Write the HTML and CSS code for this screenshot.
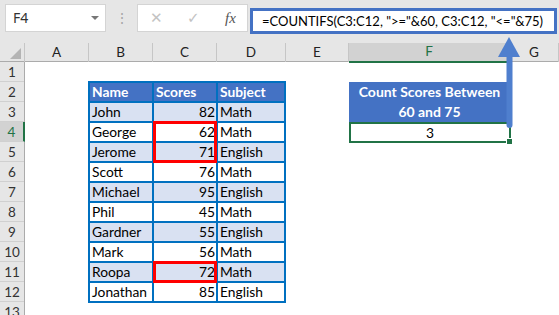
FILE: index.html
```html
<!DOCTYPE html>
<html lang="en">
<head>
  <meta charset="UTF-8">
  <title>COUNTIFS between two values</title>
  <link rel="stylesheet" href="styles.css">
</head>
<body>
  <div class="window">
    <!-- formula bar -->
    <div class="toolbar">
      <div class="name-box">F4<span class="drop"></span></div>
      <div class="grip">&#8942;</div>
      <div class="fx-box">
        <span class="btn">&#10005;</span>
        <span class="btn">&#10003;</span>
        <span class="fx">fx</span>
      </div>
      <div class="formula">=COUNTIFS(C3:C12, "&gt;="&amp;60, C3:C12, "&lt;="&amp;75)</div>
    </div>

    <!-- column headings -->
    <div class="col-heads">
      <div class="corner"></div>
      <div class="col-head">A</div>
      <div class="col-head">B</div>
      <div class="col-head">C</div>
      <div class="col-head">D</div>
      <div class="col-head">E</div>
      <div class="col-head active">F</div>
      <div class="col-head">G</div>
    </div>

    <div class="sheet">
      <div class="row-heads">
        <div class="row-head">1</div>
        <div class="row-head">2</div>
        <div class="row-head">3</div>
        <div class="row-head active">4</div>
        <div class="row-head">5</div>
        <div class="row-head">6</div>
        <div class="row-head">7</div>
        <div class="row-head">8</div>
        <div class="row-head">9</div>
        <div class="row-head">10</div>
        <div class="row-head">11</div>
        <div class="row-head">12</div>
        <div class="row-head">13</div>
      </div>

      <div class="cells">
        <div class="scores">
          <div class="th">Name</div><div class="th">Scores</div><div class="th">Subject</div>
          <div class="td band">John</div><div class="td band num">82</div><div class="td band">Math</div>
          <div class="td">George</div><div class="td num">62</div><div class="td">Math</div>
          <div class="td band">Jerome</div><div class="td band num">71</div><div class="td band">English</div>
          <div class="td">Scott</div><div class="td num">76</div><div class="td">Math</div>
          <div class="td band">Michael</div><div class="td band num">95</div><div class="td band">English</div>
          <div class="td">Phil</div><div class="td num">45</div><div class="td">Math</div>
          <div class="td band">Gardner</div><div class="td band num">55</div><div class="td band">English</div>
          <div class="td">Mark</div><div class="td num">56</div><div class="td">Math</div>
          <div class="td band">Roopa</div><div class="td band num">72</div><div class="td band">Math</div>
          <div class="td">Jonathan</div><div class="td num">85</div><div class="td">English</div>

          <div class="mark mark-pair"></div>
          <div class="mark mark-one"></div>
        </div>

        <div class="result">
          <div class="result-head">Count Scores Between<br>60 and 75</div>
          <div class="result-cell">3<span class="handle"></span></div>
        </div>
      </div>
    </div>

    <!-- arrow from result to formula -->
    <svg class="arrow" width="24" height="94" viewBox="0 0 24 94">
      <path d="M12 0 L23 20 L1 20 Z" fill="#4f7fce"/>
      <path d="M9.5 18 V88 A3 3 0 0 0 15.5 88 V18 Z" fill="#4f7fce"/>
    </svg>
  </div>
</body>
</html>
```

FILE: styles.css
```css
body {
  margin: 0;
  padding: 0;
  background: #fff;
  font-family: 'Lato', 'Liberation Sans', sans-serif;
}

.window {
  position: relative;
  width: 559px;
  height: 315px;
  overflow: hidden;
}

/* formula bar */
.toolbar {
  height: 42px;
  background: #e6e6e6;
  display: flex;
  align-items: flex-start;
  padding-left: 5px;
  box-sizing: border-box;
}

.name-box {
  margin-top: 4px;
  width: 101px;
  height: 28px;
  box-sizing: border-box;
  background: #fff;
  border: 1px solid #d4d4d4;
  font-family: 'Noto Sans', sans-serif;
  font-size: 14px;
  color: #333;
  line-height: 26px;
  padding-left: 7px;
  position: relative;
}

.drop {
  position: absolute;
  right: 6px;
  top: 11px;
  border-left: 4px solid transparent;
  border-right: 4px solid transparent;
  border-top: 4px solid #777;
}

.grip {
  width: 31px;
  text-align: center;
  color: #a6a6a6;
  font-size: 14px;
  line-height: 28px;
  margin-top: 4px;
}

.fx-box {
  margin-top: 4px;
  width: 111px;
  height: 28px;
  box-sizing: border-box;
  background: #fff;
  border: 1px solid #d4d4d4;
  display: flex;
  align-items: center;
  padding-left: 12px;
}

.btn {
  color: #c3c3c3;
  font-family: 'DejaVu Sans', sans-serif;
  font-size: 15px;
  width: 37px;
}

.fx {
  font-family: 'Liberation Serif', serif;
  font-style: italic;
  font-size: 15px;
  color: #555;
  margin-left: 1px;
}

.formula {
  margin-top: 8px;
  margin-left: 2px;
  width: 307px;
  height: 26px;
  box-sizing: border-box;
  background: #fff;
  border: 3px solid #4472c4;
  font-size: 13px;
  line-height: 20px;
  padding-left: 9px;
  color: #000;
  white-space: nowrap;
}

/* column headings */
.col-heads {
  display: grid;
  grid-template-columns: 25px 64px 64px 64px 69px 63px 161px 1fr;
  height: 20px;
  background: #e6e6e6;
  border-bottom: 1px solid #ababab;
  box-sizing: border-box;
}

.corner {
  position: relative;
  border-right: 1px solid #c6c6c6;
  margin-top: 1px;
}

.corner::after {
  content: '';
  position: absolute;
  right: 3px;
  bottom: 3px;
  border-left: 11px solid transparent;
  border-bottom: 11px solid #b4b4b4;
}

.col-head {
  text-align: center;
  font-size: 13.5px;
  line-height: 19px;
  color: #222;
  border-right: 1px solid #c6c6c6;
  margin-top: 1px;
}

.col-head.active {
  background: #d2d2d2;
  color: #217346;
  border-bottom: 2px solid #217346;
  line-height: 17px;
  margin-bottom: -1px;
}

/* rows */
.sheet {
  display: flex;
}

.row-heads {
  width: 25px;
  flex: 0 0 25px;
  background: #e6e6e6;
  border-right: 1px solid #ababab;
  box-sizing: border-box;
}

.row-head {
  height: 20px;
  box-sizing: border-box;
  border-bottom: 1px solid #d0d0d0;
  text-align: center;
  font-size: 13.5px;
  line-height: 20px;
  color: #333;
}

.row-head.active {
  background: #d2d2d2;
  color: #217346;
  border-right: 2px solid #217346;
  margin-right: -1px;
}

.cells {
  flex: 1;
  display: grid;
  grid-template-columns: 64px 64px 64px 68px 64px 161px 1fr;
  grid-template-rows: repeat(13, 20px);
}

/* data table */
.scores {
  grid-column: 2 / 5;
  grid-row: 2 / 13;
  position: relative;
  margin: -1px;
  display: grid;
  grid-template-columns: 62px 62px 66px;
  grid-auto-rows: 18px;
  gap: 2px;
  padding: 2px;
  background: #0070c0;
  font-size: 13.8px;
}

.th {
  background: #4472c4;
  color: #fff;
  font-weight: bold;
  line-height: 18px;
  padding-left: 2px;
}

.td {
  background: #fff;
  color: #000;
  line-height: 18px;
  padding-left: 2px;
}

.td.band {
  background: #d9e1f2;
}

.td.num {
  text-align: right;
  padding-left: 0;
  padding-right: 1px;
}

.mark {
  position: absolute;
  left: 65px;
  width: 64px;
  border: 3px solid #ff0000;
  box-sizing: border-box;
}

.mark-pair {
  top: 40px;
  height: 42px;
}

.mark-one {
  top: 180px;
  height: 22px;
}

/* result block */
.result {
  grid-column: 6;
  grid-row: 2 / 5;
  display: flex;
  flex-direction: column;
}

.result-head {
  height: 40px;
  background: #4472c4;
  color: #fff;
  font-weight: bold;
  font-size: 14px;
  text-align: center;
  line-height: 20px;
}

.result-cell {
  position: relative;
  height: 21px;
  box-sizing: border-box;
  border: 2px solid #217346;
  margin-right: -1px;
  text-align: center;
  font-size: 13.8px;
  line-height: 17px;
}

.handle {
  position: absolute;
  right: -4px;
  bottom: -4px;
  width: 5px;
  height: 5px;
  background: #217346;
  border: 1px solid #fff;
}

.arrow {
  position: absolute;
  left: 497px;
  top: 37px;
}
```
